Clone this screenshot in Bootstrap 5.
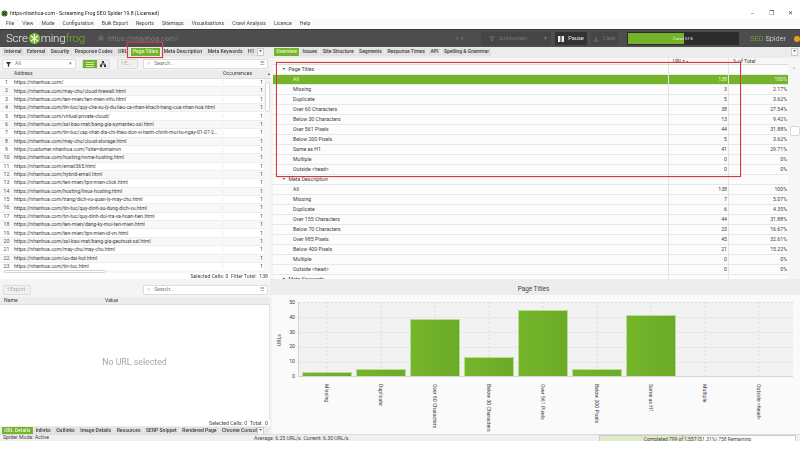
<!DOCTYPE html>
<html lang="en">
<head>
<meta charset="UTF-8" />
<title>Screaming Frog SEO Spider</title>
<link href="https://cdn.jsdelivr.net/npm/bootstrap@5.3.3/dist/css/bootstrap.min.css" rel="stylesheet" />
<style>
  html, body { height: 450px; overflow: hidden; }
  body { background: #fff; font-family: Roboto, "Liberation Sans", sans-serif; font-size: 5.2px; color: #3a3a3a; line-height: 1; }
  .app { width: 800px; height: 450px; position: relative; filter: blur(.3px); }

  .title-bar { height: 19px; padding: 11px 0 0 1px; color: #222; }
  .title-bar svg { margin: -1px 2px 0 0; }
  .win-btns { margin-left: auto; font-size: 6px; margin-top: -1px; color: #444; }
  .win-btns span { width: 19px; text-align: center; }
  .menu-bar { height: 10px; background: #fafafa; padding-left: 6px; gap: 8px; align-items: center; color: #444; }

  .head-bar { height: 18px; background: #4d4d4d; border-top: 1px solid #3a3a3a; align-items: center; padding-left: 6px; color: #ccc; }
  .logo-txt { font-size: 11.5px; color: #f2f2f2; font-weight: 300; width: 92px; flex: none; letter-spacing: -.2px; }
  .logo-txt b { color: #79b52c; font-weight: 300; }
  .url-box { width: 357px; flex: none; color: #7d7d7d; font-size: 7.2px; }
  .url-rest { width: 26px; flex: none; font-size: 5px; color: #777; }
  .dark-box { background: #454545; height: 13px; display: flex; align-items: center; color: #777; font-size: 5.6px; flex: none; }
  .crawl-box { width: 112px; height: 13px; background: #2c2c2c; position: relative; margin-left: 9px; flex: none; text-align: center; line-height: 13px; color: #eee; font-size: 4.4px; }
  .crawl-fill { position: absolute; left: 1px; top: 1px; bottom: 1px; width: 56px; background: #74b42b; }
  .crawl-box span { position: relative; }
  .seo-txt { font-size: 7.4px; margin-left: 11px; color: #e8e8e8; flex: none; font-weight: 300; }
  .seo-txt b { color: #79b52c; font-weight: 300; }
  .info-dot { width: 6px; height: 6px; border-radius: 50%; background: #e5a11c; margin-left: 8px; flex: none; }

  .panes { height: 387px; }
  .left-pane { width: 270px; flex: none; background: #fff; }
  .left-pane > *, .right-pane > * { flex: none; }
  .right-pane { flex: 1; background: #f3f3f3; min-width: 0; }

  .tab-row { height: 11px; background: #ececec; padding: 1px 2px 2px; align-items: stretch; white-space: nowrap; }
  .tab-clip { display: flex; gap: 1px; overflow: hidden; }
  .tab-itm { background: #e2e2e2; padding: 0 2.25px; display: flex; align-items: center; font-weight: 500; font-size: 5.05px; color: #3d3d3d; flex: none; }
  .tab-on { background: #74b42b; color: #eaf6da; }
  .tab-more { background: #fafafa; border: 1px solid #ccc; width: 7px; font-size: 3.6px; display: flex; align-items: center; justify-content: center; flex: none; }

  .tool-row { height: 12px; background: #f4f4f4; padding: 0 2px; align-items: center; }
  .tool-box { background: #fff; border: 1px solid #ddd; height: 10px; display: flex; align-items: center; padding: 0 3px; color: #777; border-radius: 1px; flex: none; }
  .seg-group { width: 28px; height: 10px; margin: 0 7px 0 6px; border: 1px solid #ddd; flex: none; }
  .grn-seg { width: 14px; background: #74b42b; display: flex; align-items: center; justify-content: center; }
  .seg-2 { flex: 1; background: #ececec; display: flex; align-items: center; justify-content: center; }

  .url-head { height: 9px; background: #ececec; border-bottom: 1px solid #ddd; align-items: center; }
  .url-rows { height: 191px; overflow: hidden; }
  .url-row { height: 8.36px; display: flex; align-items: center; border-bottom: 1px solid #eee; background: #fff; color: #3c3c3c; }
  .url-row:nth-child(even) { background: #f8f8f8; }
  .c-num { width: 13px; flex: none; text-align: center; color: #555; }
  .c-addr { width: 209px; flex: none; white-space: nowrap; overflow: hidden; padding-left: 1px; font-size: 5.05px; }
  .c-occ { width: 42px; flex: none; text-align: right; padding-right: 1px; border-left: 1px solid #eee; }
  .h-occ { width: 42px; flex: none; padding-left: 1px; }
  .v-scroll { width: 6px; flex: none; background: #f6f6f6; position: relative; }
  .v-thumb { position: absolute; left: 1px; right: 0; top: 3px; height: 30px; background: #fff; border: 1px solid #d8d8d8; border-radius: 2px; }
  .h-scroll { height: 3px; background: #f6f6f6; }
  .h-thumb { display: block; width: 102px; height: 3px; margin-left: 4px; background: #fff; border: 1px solid #d4d4d4; border-radius: 2px; }
  .sum-row { height: 6px; text-align: right; padding-right: 2px; color: #444; line-height: 6px; }
  .exp-row { height: 18px; background: #f4f4f4; align-items: center; padding: 4px 2px 0 3px; }
  .name-head { height: 8px; background: #ececec; border-bottom: 1px solid #ddd; align-items: center; }
  .det-body { height: 115px; color: #a8a8a8; font-size: 8.8px; display: flex; align-items: center; justify-content: center; border-right: 1px solid #e2e2e2; }

  .ov-wrap { height: 221px; }
  .ov-main { margin-left: 3px; width: 515px; flex: none; }
  .ov-head { height: 7px; background: #f7f7f7; border-bottom: 1px solid #ddd; }
  .ov-rows { height: 214px; overflow: hidden; background: #fff; }
  .ov-row { height: 10px; display: flex; align-items: center; border-bottom: 1px solid #e8e8e8; background: #fcfcfc; color: #3c3c3c; }
  .ov-row.is-on { background: #74b42b; color: #eaf6da; }
  .o-name { width: 395px; flex: none; padding-left: 20px; }
  .o-grp { padding-left: 9px; }
  .o-grp i { font-style: normal; font-size: 3.6px; margin-right: 3px; vertical-align: 1px; }
  .o-url, .o-pct { width: 60px; flex: none; text-align: right; border-left: 1px solid #e4e4e4; height: 100%; line-height: 9px; padding-right: 1px; }
  .ov-scroll { flex: 1; background: #f6f6f6; position: relative; color: #bbb; font-size: 4px; text-align: center; padding-top: 8px; }
  .ov-thumb { position: absolute; left: 2px; right: 0; top: 68px; height: 10px; background: #fff; border: 1px solid #d8d8d8; border-radius: 2px; }

  .chart-ttl { height: 16px; background: #ededed; text-align: center; font-size: 6.4px; line-height: 21px; color: #444; padding-right: 3px; }
  .chart-box { height: 139px; background: #fafafa; margin-left: 2px; padding: 7px 7px 0 0; }
  .y-name { width: 12px; flex: none; writing-mode: vertical-rl; transform: rotate(180deg); text-align: center; height: 75px; margin-left: 5px; }
  .y-nums { width: 6px; flex: none; height: 79px; margin-top: -2px; margin-right: 3px; display: flex; flex-direction: column; justify-content: space-between; text-align: right; }
  .y-nums span { height: 5px; line-height: 5px; }
  .plot-box { flex: 1; height: 75px; background: #f2f2f2; border-bottom: 1px solid #d4d4d4; border-left: 1px solid #d4d4d4; padding-left: 3px; display: flex; align-items: flex-end; gap: 4px; position: relative; }
  .plot-grid { position: absolute; left: 0; top: 0; width: 100%; height: 100%; }
  .bar-slot { width: 50px; flex: none; position: relative; }
  .bar-fill { background: linear-gradient(90deg, #75b52b, #6cab28); border: 1px solid #b8dc90; border-bottom: 0; }
  .x-row { padding-left: 29px; gap: 4px; }
  .x-lab { width: 50px; flex: none; display: flex; justify-content: center; padding-top: 5px; }
  .x-lab span { writing-mode: vertical-rl; white-space: nowrap; font-size: 5.2px; }

  .status-bar { height: 7px; background: #f0f0f0; border-top: 1px solid #dcdcdc; position: relative; align-items: center; color: #444; padding-left: 3px; overflow: hidden; }
  .status-avg { position: absolute; left: 254px; top: 1px; }
  .status-prog { position: absolute; left: 599px; width: 197px; top: 0; height: 7px; border: 1px solid #ccc; border-bottom: 0; background: #fff; text-align: center; line-height: 7px; font-size: 4.95px; }
  .status-fill { position: absolute; left: 0; top: 0; bottom: 0; width: 101px; background: #dfeccb; }
  .status-prog span { position: relative; }

  .red-mark { position: absolute; border: 1px solid #d6363c; box-shadow: 0 0 1px #e88; pointer-events: none; }
  .red-tab { left: 127px; top: 42px; width: 36px; height: 16px; }
  .red-ov { left: 276px; top: 62px; width: 465px; height: 115px; }
</style>
</head>
<body>
<div class="app">
  <div class="title-bar d-flex align-items-start">
    <svg width="7" height="7" viewBox="0 0 8 8"><circle cx="4" cy="4" r="3.5" fill="#4d7a24"/><path d="M2 2l4 4M6 2L2 6" stroke="#222" stroke-width="1"/></svg>
    <span>https-nhanhoa-com - Screaming Frog SEO Spider 19.8 (Licensed)</span>
    <div class="win-btns d-flex"><span>–</span><span>❐</span><span>✕</span></div>
  </div>
  <div class="menu-bar d-flex">
    <span>File</span><span>View</span><span>Mode</span><span>Configuration</span><span>Bulk Export</span><span>Reports</span><span>Sitemaps</span><span>Visualisations</span><span>Crawl Analysis</span><span>Licence</span><span>Help</span>
  </div>
  <div class="head-bar d-flex">
    <div class="logo-txt d-flex align-items-center">Scre<svg width="13" height="13" viewBox="0 0 14 14"><circle cx="7" cy="7" r="6" fill="#79b52c"/><path d="M3 4l8 6M11 4l-8 6M7 2v10" stroke="#eef6df" stroke-width="1.3"/></svg>ming<b>frog</b></div>
    <div class="url-box d-flex align-items-center gap-1"><svg width="6" height="6" viewBox="0 0 8 8"><circle cx="4" cy="4" r="3.5" fill="#666"/></svg><span>https://nhanhoa.com/</span></div>
    <div class="url-rest">✕ &nbsp;▾</div>
    <div class="dark-box ps-2" style="width:70px"><svg class="me-1" width="6" height="6" viewBox="0 0 8 8"><path d="M1 1h6L4.800 4v3L3.200 6V4z" fill="none" stroke="#777"/></svg>Subdomain<span class="ms-auto pe-1">▾</span></div>
    <div class="dark-box justify-content-center ms-1" style="width:32px;background:#333;color:#eee"><svg class="me-1" width="6" height="6" viewBox="0 0 6 6"><path d="M0 0h2.400v6H0zM3.600 0H6v6H3.600z" fill="#eee"/></svg>Pause</div>
    <div class="dark-box justify-content-center ms-1" style="width:27px"><svg class="me-1" width="6" height="6" viewBox="0 0 8 8"><path d="M1 7h6M2 7l1-3h2l1 3M4 4V1" fill="none" stroke="#777"/></svg>Clear</div>
    <div class="crawl-box"><div class="crawl-fill"></div><span>Crawl 51%</span></div>
    <div class="seo-txt"><b>SEO</b> Spider</div>
    <div class="info-dot"></div>
  </div>

  <div class="panes d-flex">
    <div class="left-pane d-flex flex-column">
      <div class="tab-row d-flex">
        <div class="tab-clip" style="width:256px">
          <span class="tab-itm">Internal</span><span class="tab-itm">External</span><span class="tab-itm">Security</span><span class="tab-itm">Response Codes</span><span class="tab-itm">URL</span><span class="tab-itm tab-on">Page Titles</span><span class="tab-itm">Meta Description</span><span class="tab-itm">Meta Keywords</span><span class="tab-itm">H1</span>
        </div>
        <span class="tab-more ms-auto me-1">▼</span>
      </div>
      <div class="tool-row d-flex">
        <div class="tool-box" style="width:74px"><svg class="me-1" width="5" height="5" viewBox="0 0 6 6"><path d="M0 0h6L3.800 3v3L2.200 5V3z" fill="#333"/></svg>All<span class="ms-auto">▾</span></div>
        <div class="seg-group d-flex">
          <span class="grn-seg"><svg width="8" height="5" viewBox="0 0 8 5"><path d="M0 .5h8M0 2.500h8M0 4.500h8" stroke="#cfe8a8"/></svg></span>
          <span class="seg-2"><svg width="6" height="6" viewBox="0 0 6 6"><path d="M3 0v2M1 5V3h4v2" fill="none" stroke="#333"/><path d="M0 4h2v2H0zM4 4h2v2H4zM2 0h2v2H2z" fill="#333"/></svg></span>
        </div>
        <div class="tool-box" style="width:21px;background:#f0f0f0;color:#aaa">⤒ E...</div>
        <div class="tool-box ms-auto" style="width:125px"><span class="me-1">○</span>Search...<span class="ms-auto">☰</span></div>
      </div>
      <div class="url-head d-flex"><span class="c-num"></span><span class="c-addr">Address</span><span class="h-occ">Occurrences</span><span class="ms-1" style="font-size:4px">▴</span></div>
      <div class="d-flex">
        <div class="url-rows flex-grow-1" id="urlRows"></div>
        <div class="v-scroll"><div class="v-thumb"></div></div>
      </div>
      <div class="h-scroll"><span class="h-thumb"></span></div>
      <div class="sum-row">Selected Cells: 0 &nbsp;Filter Total: &nbsp;138</div>
      <div class="exp-row d-flex">
        <div class="tool-box" style="width:28px;background:#f0f0f0;color:#aaa">⤒ Export</div>
        <div class="tool-box ms-auto" style="width:125px"><span class="me-1">○</span>Search...<span class="ms-auto">☰</span></div>
      </div>
      <div class="name-head d-flex"><span class="ps-1" style="width:105px">Name</span><span>Value</span></div>
      <div class="det-body">No URL selected</div>
      <div class="sum-row">Selected Cells: 0 &nbsp;Total: &nbsp;0</div>
      <div class="tab-row d-flex">
        <div class="tab-clip" style="width:256px">
          <span class="tab-itm tab-on">URL Details</span><span class="tab-itm">Inlinks</span><span class="tab-itm">Outlinks</span><span class="tab-itm">Image Details</span><span class="tab-itm">Resources</span><span class="tab-itm">SERP Snippet</span><span class="tab-itm">Rendered Page</span><span class="tab-itm">Chrome Console</span>
        </div>
        <span class="tab-more ms-auto me-1">▼</span>
      </div>
    </div>

    <div class="right-pane d-flex flex-column">
      <div class="tab-row d-flex ps-1">
        <div class="tab-clip">
          <span class="tab-itm tab-on">Overview</span><span class="tab-itm">Issues</span><span class="tab-itm">Site Structure</span><span class="tab-itm">Segments</span><span class="tab-itm">Response Times</span><span class="tab-itm">API</span><span class="tab-itm">Spelling &amp; Grammar</span>
        </div>
        <span class="tab-more ms-auto">▼</span>
      </div>
      <div class="ov-wrap d-flex">
        <div class="ov-main">
          <div class="ov-head d-flex">
            <span style="width:395px"></span><span class="o-url text-start ps-1" style="line-height:6px">URLs ▴</span><span class="o-pct text-start ps-1" style="line-height:6px">% of Total</span>
          </div>
          <div class="ov-rows" id="ovRows"></div>
        </div>
        <div class="ov-scroll">▴<div class="ov-thumb"></div></div>
      </div>
      <div class="chart-ttl">Page Titles</div>
      <div class="chart-box">
        <div class="d-flex">
          <div class="y-name">URLs</div>
          <div class="y-nums"><span>50</span><span>40</span><span>30</span><span>20</span><span>10</span><span>0</span></div>
          <div class="plot-box" id="plotBox"></div>
        </div>
        <div class="x-row d-flex" id="xRow"></div>
      </div>
    </div>
  </div>

  <div class="status-bar d-flex">
    <span>Spider Mode: Active</span>
    <span class="status-avg">Average: 6.25 URL/s. Current: 6.30 URL/s.</span>
    <div class="status-prog"><div class="status-fill"></div><span>Completed 799 of 1,557 (51.31%) 758 Remaining</span></div>
  </div>

  <div class="red-mark red-tab"></div>
  <div class="red-mark red-ov"></div>
</div>

<script src="https://cdn.jsdelivr.net/npm/bootstrap@5.3.3/dist/js/bootstrap.bundle.min.js"></script>
<script>
  const urls = [
    "https://nhanhoa.com/",
    "https://nhanhoa.com/may-chu/cloud-firewall.html",
    "https://nhanhoa.com/ten-mien/ten-mien-info.html",
    "https://nhanhoa.com/tin-tuc/quy-che-xu-ly-du-lieu-ca-nhan-khach-hang-cua-nhan-hoa.html",
    "https://nhanhoa.com/virtual-private-cloud/",
    "https://nhanhoa.com/ssl-bao-mat/bang-gia-symantec-ssl.html",
    "https://nhanhoa.com/tin-tuc/cap-nhat-dia-chi-theo-don-vi-hanh-chinh-moi-tu-ngay-01-07-2...",
    "https://nhanhoa.com/may-chu/cloud-storage.html",
    "https://customer.nhanhoa.com/?site=domainvn",
    "https://nhanhoa.com/hosting/nvme-hosting.html",
    "https://nhanhoa.com/email365.html",
    "https://nhanhoa.com/hybrid-email.html",
    "https://nhanhoa.com/ten-mien/tpn-mien-click.html",
    "https://nhanhoa.com/hosting/linux-hosting.html",
    "https://nhanhoa.com/trang/dich-vu-quan-ly-may-chu.html",
    "https://nhanhoa.com/tin-tuc/quy-dinh-su-dung-dich-vu.html",
    "https://nhanhoa.com/tin-tuc/quy-dinh-doi-tra-va-hoan-tien.html",
    "https://nhanhoa.com/ten-mien/dang-ky-moi-ten-mien.html",
    "https://nhanhoa.com/ten-mien/tpn-mien-id-vn.html",
    "https://nhanhoa.com/ssl-bao-mat/bang-gia-geotrust-ssl.html",
    "https://nhanhoa.com/may-chu/may-chu.html",
    "https://nhanhoa.com/uu-dai-hot.html",
    "https://nhanhoa.com/tin-tuc.html"
  ];
  document.getElementById("urlRows").innerHTML = urls.map((u, i) => `
    <div class="url-row"><span class="c-num">${i + 1}</span><span class="c-addr">${u}</span><span class="c-occ">1</span></div>`).join("");

  const overview = [
    ["g", "Page Titles"],
    ["on", "All", "138", "100%"], ["", "Missing", "3", "2.17%"], ["", "Duplicate", "5", "3.62%"],
    ["", "Over 60 Characters", "38", "27.54%"], ["", "Below 30 Characters", "13", "9.42%"],
    ["", "Over 561 Pixels", "44", "31.88%"], ["", "Below 200 Pixels", "5", "3.62%"],
    ["", "Same as H1", "41", "29.71%"], ["", "Multiple", "0", "0%"], ["", "Outside &lt;head&gt;", "0", "0%"],
    ["g", "Meta Description"],
    ["", "All", "138", "100%"], ["", "Missing", "7", "5.07%"], ["", "Duplicate", "6", "4.35%"],
    ["", "Over 155 Characters", "44", "31.88%"], ["", "Below 70 Characters", "23", "16.67%"],
    ["", "Over 985 Pixels", "45", "32.61%"], ["", "Below 400 Pixels", "21", "15.22%"],
    ["", "Multiple", "0", "0%"], ["", "Outside &lt;head&gt;", "0", "0%"],
    ["g", "Meta Keywords"]
  ];
  document.getElementById("ovRows").innerHTML = overview.map(([k, n, a, b]) => `
    <div class="ov-row ${k === "on" ? "is-on" : ""}">
      <span class="o-name ${k === "g" ? "o-grp" : ""}">${k === "g" ? "<i>▼</i>" : ""}${n}</span>
      <span class="o-url">${a || ""}</span><span class="o-pct">${b || ""}</span>
    </div>`).join("");

  const bars = [["Missing", 3], ["Duplicate", 5], ["Over 60 Characters", 38], ["Below 30 Characters", 13], ["Over 561 Pixels", 44], ["Below 200 Pixels", 5], ["Same as H1", 41], ["Multiple", 0], ["Outside &lt;head&gt;", 0]];
  const hLines = [0, 15, 30, 45, 60].map(y => `<line x1="0" x2="500" y1="${y + 0.5}" y2="${y + 0.5}"/>`).join("");
  const vLines = bars.map((b, i) => `<line y1="0" y2="75" x1="${28 + i * 54}" x2="${28 + i * 54}"/>`).join("");
  document.getElementById("plotBox").innerHTML =
    `<svg class="plot-grid" stroke="#dcdcdc" stroke-width="1" stroke-dasharray="2 2">${hLines}${vLines}</svg>` +
    bars.map(([, v]) => `
    <div class="bar-slot">${v ? `<div class="bar-fill" style="height:${v * 1.5}px"></div>` : ""}</div>`).join("");
  document.getElementById("xRow").innerHTML = bars.map(([n]) => `
    <div class="x-lab"><span>${n}</span></div>`).join("");
</script>
</body>
</html>
